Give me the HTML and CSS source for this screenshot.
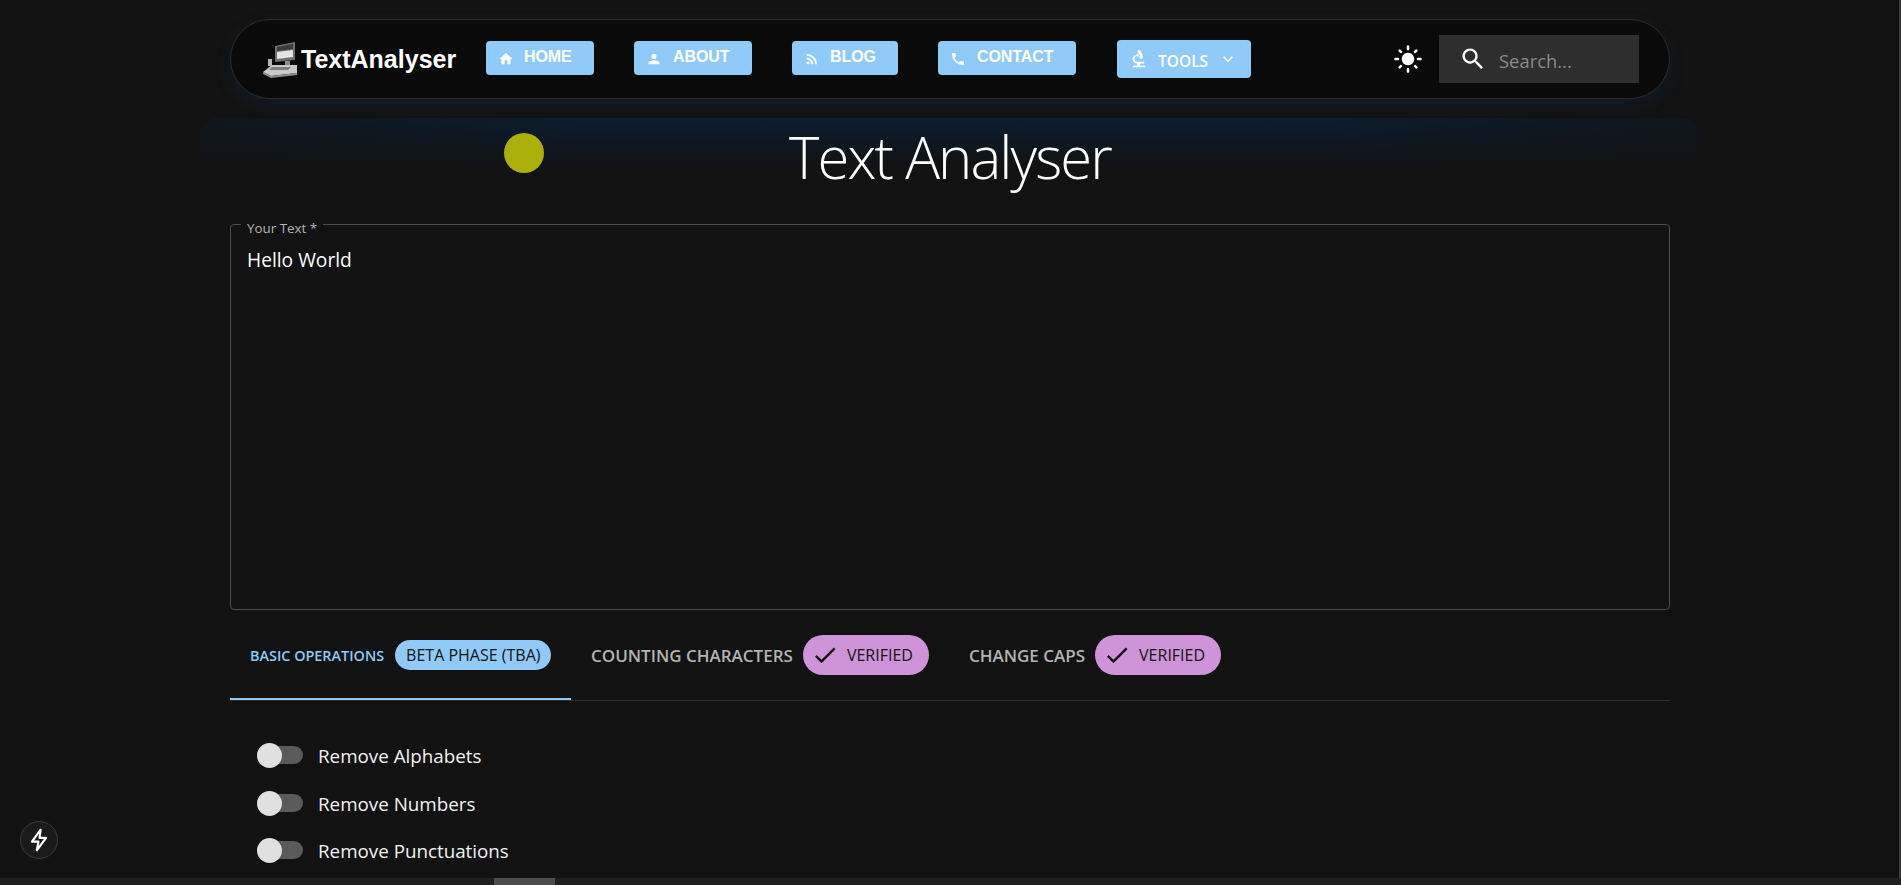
FILE: index.html
```html
<!DOCTYPE html>
<html lang="en">
<head>
<meta charset="utf-8">
<title>TextAnalyser</title>
<link rel="stylesheet" href="styles.css">
</head>
<body>
<div class="viewport">
  <div class="page">
    <div class="container">
      <header class="navbar">
        <a class="brand">
          <svg class="brand-logo" viewBox="0 0 40 40" aria-hidden="true">
            <path d="M14 7 L34 3 V21 L14 23 Z" fill="#6f6f6f"/>
            <path d="M16 13 L32 11 V18 L16 20 Z" fill="#e4e4e4"/>
            <path d="M16 8 L32 5 V10 L16 12 Z" fill="#3c3c3c"/>
            <path d="M24 22 H29 V26 H24 Z" fill="#8a8a8a"/>
            <path d="M7 20 H11 V27 H7 Z" fill="#b5b5b5"/>
            <path d="M2 33 L11 26 H36 V34 L10 37 Z" fill="#c9c9c9"/>
            <path d="M11 28 H30 L27 31 H8 Z" fill="#7d7d7d"/>
            <path d="M2 33 L10 37 L36 34 V36 L10 39 L2 35 Z" fill="#8d8d8d"/>
          </svg>
          <span class="brand-name">TextAnalyser</span>
        </a>
        <nav class="nav-links">
          <a class="nav-btn nav-home"><svg class="nav-ico" viewBox="0 0 24 24"><path d="M10 20v-6h4v6h5v-8h3L12 3 2 12h3v8z"/></svg><span>HOME</span></a>
          <a class="nav-btn nav-about"><svg class="nav-ico" viewBox="0 0 24 24"><path d="M12 12c2.21 0 4-1.79 4-4s-1.79-4-4-4-4 1.79-4 4 1.79 4 4 4zm0 2c-2.67 0-8 1.34-8 4v2h16v-2c0-2.66-5.33-4-8-4z"/></svg><span>ABOUT</span></a>
          <a class="nav-btn nav-blog"><svg class="nav-ico" viewBox="0 0 24 24"><circle cx="6.18" cy="17.82" r="2.18"/><path d="M4 4.44v2.83c7.03 0 12.73 5.7 12.73 12.73h2.83c0-8.59-6.97-15.56-15.56-15.56zm0 5.66v2.83c3.9 0 7.07 3.17 7.07 7.07h2.83c0-5.47-4.43-9.9-9.9-9.9z"/></svg><span>BLOG</span></a>
          <a class="nav-btn nav-contact"><svg class="nav-ico" viewBox="0 0 24 24"><path d="M6.62 10.79c1.44 2.83 3.76 5.14 6.59 6.59l2.2-2.2c.27-.27.67-.36 1.02-.24 1.12.37 2.33.57 3.57.57.55 0 1 .45 1 1V20c0 .55-.45 1-1 1-9.39 0-17-7.61-17-17 0-.55.45-1 1-1h3.5c.55 0 1 .45 1 1 0 1.25.2 2.45.57 3.57.11.35.03.74-.25 1.02l-2.2 2.2z"/></svg><span>CONTACT</span></a>
          <a class="nav-btn nav-tools"><svg class="tools-ico" viewBox="0 0 24 24"><path d="M7 19c-1.1 0-2 .9-2 2h14c0-1.1-.9-2-2-2h-4v-2h3c1.1 0 2-.9 2-2h-8c-1.66 0-3-1.34-3-3 0-1.09.59-2.04 1.46-2.56C8.17 9.03 8 8.54 8 8c0-.21.04-.42.09-.62C6.28 8.13 5 9.92 5 12c0 2.76 2.24 5 5 5v2H7z"/><path d="M10.56 5.51C11.91 5.54 13 6.64 13 8c0 .75-.33 1.41-.85 1.87l.59 1.62.94-.34.34.94 1.88-.68-.34-.94.94-.34-2.74-7.52-.94.34-.34-.94-1.88.68.34.94-.94.35.56 1.53z"/><circle cx="10.5" cy="8" r="1.5"/></svg><span class="tools-label">TOOLS</span><svg class="chev" viewBox="0 0 24 24"><path d="M7.41 8.59 12 13.17l4.59-4.58L18 10l-6 6-6-6z"/></svg></a>
        </nav>
        <div class="nav-right">
          <svg class="sun" viewBox="0 0 24 24"><path d="M12 7c-2.76 0-5 2.24-5 5s2.24 5 5 5 5-2.24 5-5-2.24-5-5-5zM2 13h2c.55 0 1-.45 1-1s-.45-1-1-1H2c-.55 0-1 .45-1 1s.45 1 1 1zm18 0h2c.55 0 1-.45 1-1s-.45-1-1-1h-2c-.55 0-1 .45-1 1s.45 1 1 1zM11 2v2c0 .55.45 1 1 1s1-.45 1-1V2c0-.55-.45-1-1-1s-1 .45-1 1zm0 18v2c0 .55.45 1 1 1s1-.45 1-1v-2c0-.55-.45-1-1-1s-1 .45-1 1zM5.99 4.58a.996.996 0 0 0-1.41 0 .996.996 0 0 0 0 1.41l1.06 1.06c.39.39 1.03.39 1.41 0s.39-1.03 0-1.41L5.99 4.58zm12.37 12.37a.996.996 0 0 0-1.41 0 .996.996 0 0 0 0 1.41l1.06 1.06c.39.39 1.03.39 1.41 0a.996.996 0 0 0 0-1.41l-1.06-1.06zm1.06-10.96a.996.996 0 0 0 0-1.41.996.996 0 0 0-1.41 0l-1.06 1.06c-.39.39-.39 1.03 0 1.41s1.03.39 1.41 0l1.06-1.06zM7.05 18.36a.996.996 0 0 0 0-1.41.996.996 0 0 0-1.41 0l-1.06 1.06c-.39.39-.39 1.03 0 1.41s1.03.39 1.41 0l1.06-1.06z"/></svg>
          <div class="search">
            <svg class="search-ico" viewBox="0 0 24 24"><path d="M15.5 14h-.79l-.28-.27C15.41 12.59 16 11.11 16 9.5 16 5.91 13.09 3 9.5 3S3 5.91 3 9.5 5.91 16 9.5 16c1.61 0 3.09-.59 4.23-1.57l.27.28v.79l5 4.99L20.49 19l-4.99-5zm-6 0C7.01 14 5 11.99 5 9.5S7.01 5 9.5 5 14 7.01 14 9.5 11.99 14 9.5 14z"/></svg>
            <span class="search-text">Search...</span>
          </div>
        </div>
      </header>

      <div class="hero">
        <h1 class="title">Text Analyser</h1>
        <span class="cursor-dot"></span>
      </div>

      <fieldset class="field">
        <legend class="field-legend"><span class="field-label">Your Text *</span></legend>
        <div class="field-value">Hello World</div>
      </fieldset>

      <div class="tabs">
        <div class="tab tab-active">
          <span class="tab-label-small">BASIC OPERATIONS</span>
          <span class="chip chip-blue">BETA PHASE (TBA)</span>
        </div>
        <div class="tab">
          <span class="tab-label">COUNTING CHARACTERS</span>
          <span class="chip chip-purple"><svg class="check" viewBox="0 0 24 24"><path d="M9 16.17 4.83 12l-1.42 1.41L9 19 21 7l-1.41-1.41z"/></svg>VERIFIED</span>
        </div>
        <div class="tab">
          <span class="tab-label">CHANGE CAPS</span>
          <span class="chip chip-purple"><svg class="check" viewBox="0 0 24 24"><path d="M9 16.17 4.83 12l-1.42 1.41L9 19 21 7l-1.41-1.41z"/></svg>VERIFIED</span>
        </div>
      </div>

      <div class="options">
        <label class="option"><span class="switch"><span class="thumb"></span></span><span class="option-text">Remove Alphabets</span></label>
        <label class="option"><span class="switch"><span class="thumb"></span></span><span class="option-text">Remove Numbers</span></label>
        <label class="option"><span class="switch"><span class="thumb"></span></span><span class="option-text">Remove Punctuations</span></label>
      </div>
    </div>

    <button class="fab" aria-label="Dev tools"><svg viewBox="0 0 24 24" fill="none" stroke="#fff" stroke-width="2" stroke-linejoin="round"><path d="M13.5 2.5 5.5 13.5h6l-1.5 8 8.5-11.5h-6z"/></svg></button>
  </div>
  <div class="v-scroll"></div>
</div>
<div class="h-scroll"><div class="h-thumb"></div></div>
</body>
</html>
```
FILE: styles.css
```css
* { box-sizing: border-box; }
html, body { margin: 0; height: 100%; overflow: hidden; }
body {
  display: flex;
  flex-direction: column;
  background: #121212;
  color: #fff;
  font-family: "Open Sans", "Noto Sans", sans-serif;
}
.viewport { flex: 1; display: flex; min-height: 0; }
.page { flex: 1; min-width: 0; position: relative; overflow: hidden; }
.v-scroll { width: 2px; background: #3a3a3a; }
.h-scroll { height: 7px; background: #1f1f1f; }
.h-thumb { width: 61px; height: 7px; margin-left: 494px; background: #4d4d4d; }

.container { width: 1440px; margin-left: 230px; padding-top: 19px; }

/* Navbar */
.navbar {
  height: 80px;
  display: flex;
  align-items: center;
  padding-left: 30px;
  background: #0a0a0a;
  border: 1px solid #2b2b2b;
  border-radius: 40px;
  box-shadow: 0 6px 16px rgba(15, 60, 110, 0.22);
}
.brand { display: flex; align-items: center; width: 225px; }
.brand-logo { width: 40px; height: 40px; flex: none; filter: blur(0.4px); }
.brand-name {
  font-family: "Liberation Sans", Arial, sans-serif;
  font-weight: 700;
  font-size: 25px;
  line-height: 1;
  margin-top: 1px;
}
.nav-links { display: flex; align-items: center; }
.nav-btn {
  display: flex;
  align-items: center;
  height: 34px;
  background: #90caf9;
  border-radius: 4px;
  color: #fff;
  font-family: "Liberation Sans", Arial, sans-serif;
  font-weight: 700;
  font-size: 16px;
  letter-spacing: -0.1px;
  padding-bottom: 2px;
  margin-bottom: 2px;
}
.nav-ico { width: 16px; height: 16px; fill: #fff; flex: none; margin-right: 11px; margin-top: 3px; }
.nav-home { width: 108px; padding-left: 12px; margin-right: 40px; }
.nav-home .nav-ico { margin-right: 10px; }
.nav-about { width: 118px; padding-left: 12px; margin-right: 40px; }
.nav-blog { width: 106px; padding-left: 12px; margin-right: 40px; }
.nav-blog .nav-ico { margin-right: 10px; }
.nav-contact { width: 138px; padding-left: 12px; margin-right: 41px; }
.nav-tools {
  width: 134px;
  height: 38px;
  padding: 0 0 0 11px;
  margin-bottom: 0;
  font-family: "Open Sans", sans-serif;
  font-size: 15.5px;
  letter-spacing: 0;
  font-weight: 600;
}
.tools-ico { width: 22px; height: 22px; fill: #fff; flex: none; margin-right: 8px; }
.tools-label { margin-top: 3px; }
.chev { width: 20px; height: 20px; fill: #fff; margin-left: 10px; }

.nav-right { margin-left: auto; display: flex; align-items: center; padding-right: 30px; }
.sun { width: 30px; height: 30px; fill: #fff; margin-right: 16px; }
.search {
  width: 200px;
  height: 48px;
  display: flex;
  align-items: center;
  background: #2e2e2e;
  padding-left: 20px;
}
.search-ico { width: 28px; height: 28px; fill: #fff; flex: none; margin-right: 12px; }
.search-text { font-size: 18.4px; color: #8a8a8a; margin-top: 3px; }

/* Hero */
.hero {
  height: 106px;
  margin: 19px -30px 0;
  border-radius: 18px 18px 0 0;
  background:
    linear-gradient(90deg, rgba(18, 18, 18, 0.6), rgba(18, 18, 18, 0) 25%, rgba(18, 18, 18, 0) 75%, rgba(18, 18, 18, 0.6)),
    linear-gradient(180deg, #0a1c30 0, #121212 52px);
  display: flex;
  justify-content: center;
  position: relative;
}
.title {
  margin: 0;
  font-weight: 300;
  font-size: 58px;
  line-height: 78px;
  letter-spacing: -1.9px;
}
.cursor-dot {
  position: absolute;
  left: 304px;
  top: 15px;
  width: 40px;
  height: 40px;
  border-radius: 50%;
  background: #adaf0a;
}

/* Textarea */
.field {
  margin: 0;
  height: 386px;
  padding: 0 16px;
  border: 1px solid #4c4c4c;
  border-radius: 4px;
  min-width: 0;
}
.field-legend {
  padding: 0 6px;
  margin-left: -6px;
  height: 1px;
  font-size: 13.4px;
  line-height: 1px;
  color: #b3b3b3;
}
.field-label { position: relative; top: 4px; }
.field-value { margin-top: 21px; font-size: 19.2px; line-height: 28px; }

/* Tabs */
.tabs {
  height: 91px;
  display: flex;
  align-items: flex-start;
  border-bottom: 1px solid #2e2e2e;
}
.tab {
  height: 90px;
  display: flex;
  align-items: center;
  padding: 0 20px;
  gap: 10px;
  white-space: nowrap;
}
.tab-active { width: 341px; padding: 2px 0 0 20px; gap: 11px; border-bottom: 2px solid #90caf9; }
.tab-label-small { font-size: 14.4px; font-weight: 600; color: #90caf9; }
.tab-label { font-size: 17px; font-weight: 600; color: #b3b3b3; }
.chip {
  display: inline-flex;
  align-items: center;
  color: #121212;
  font-weight: 400;
  font-size: 16px;
}
.chip-blue { height: 30px; padding: 0 11px; background: #90caf9; border-radius: 15px; }
.chip-purple { height: 40px; padding: 0 16px 0 8px; background: #ce93d8; border-radius: 20px; }
.check { width: 28px; height: 28px; fill: #121212; margin-right: 8px; }

/* Options */
.options { padding: 35px 0 0 27px; display: flex; flex-direction: column; gap: 7.5px; }
.option { display: flex; align-items: center; height: 40px; }
.switch {
  position: relative;
  width: 46px;
  height: 18px;
  background: #5a5a5a;
  border-radius: 9px;
  margin: 0 15px 2px 0;
}
.thumb {
  position: absolute;
  left: 0;
  top: -3px;
  width: 25px;
  height: 25px;
  border-radius: 50%;
  background: #e0e0e0;
}
.option-text { font-size: 18.8px; color: #f2f2f2; }

/* Floating button */
.fab {
  position: absolute;
  left: 20px;
  top: 821px;
  width: 38px;
  height: 38px;
  padding: 5px;
  border-radius: 50%;
  background: #1a1a1a;
  border: 1px solid #3a3a3a;
}
.fab svg { display: block; width: 26px; height: 26px; }
```
